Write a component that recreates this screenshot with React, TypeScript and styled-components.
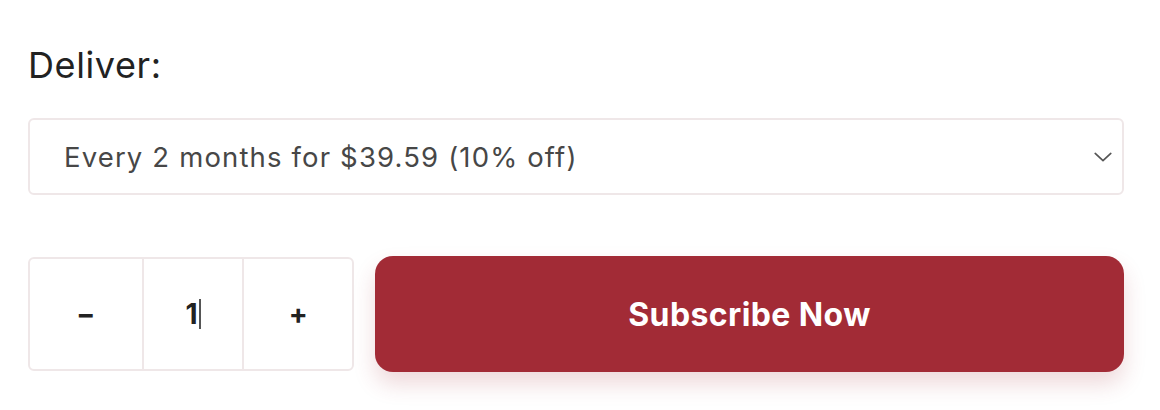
import * as React from "react";
import styled, { createGlobalStyle } from "styled-components";

const GlobalStyle = createGlobalStyle`
  html, body {
    margin: 0;
    padding: 0;
    background: #ffffff;
  }
  body {
    font-family: Inter, "Noto Sans", sans-serif;
  }
`;

const Page = styled.div`
  width: 1160px;
  height: 410px;
  box-sizing: border-box;
  padding: 42px 36px 0 28px;
  display: flex;
  flex-direction: column;
`;

const Label = styled.div`
  font-size: 36px;
  line-height: 46px;
  letter-spacing: 0.6px;
  color: #222222;
  margin-bottom: 30px;
`;

const SelectBox = styled.div`
  height: 77px;
  box-sizing: border-box;
  border: 2px solid #efe7e8;
  border-radius: 6px;
  display: flex;
  align-items: center;
  justify-content: space-between;
  padding: 0 0 0 34px;
  font-size: 27.5px;
  letter-spacing: 1.15px;
  color: #474747;
  margin-bottom: 61px;
`;

const Chevron = styled.svg`
  width: 34px;
  height: 34px;
  margin-right: 2px;
  color: #555555;
`;

const ActionRow = styled.div`
  display: flex;
  align-items: stretch;
  gap: 21px;
  height: 116px;
`;

const Stepper = styled.div`
  display: flex;
  width: 326px;
  box-sizing: border-box;
  border: 2px solid #efe7e8;
  border-radius: 6px;
  margin: 1px 0;
`;

const StepCell = styled.div<{ $width: number; $divider?: boolean }>`
  width: ${({ $width }) => $width}px;
  display: flex;
  align-items: center;
  justify-content: center;
  font-size: 28px;
  font-weight: 700;
  color: #222222;
  border-left: ${({ $divider }) => ($divider ? "2px solid #efe7e8" : "none")};
`;

const Caret = styled.span`
  display: inline-block;
  width: 2px;
  height: 30px;
  background: #555555;
  margin-left: 1px;
`;

const SubscribeButton = styled.button`
  flex: 1;
  border: none;
  border-radius: 18px;
  background: #a22b36;
  color: #ffffff;
  font-family: Inter, "Noto Sans", sans-serif;
  font-size: 32px;
  font-weight: 700;
  letter-spacing: 0.4px;
  box-shadow: 0 12px 22px rgba(162, 43, 54, 0.18);
  cursor: pointer;
`;

const App: React.FC = () => {
  return (
    <>
      <GlobalStyle />
      <Page>
        <Label>Deliver:</Label>
        <SelectBox>
          <span>Every 2 months for $39.59 (10% off)</span>
          <Chevron viewBox="0 0 24 24" fill="none" stroke="currentColor" strokeWidth={1.2} strokeLinecap="round" strokeLinejoin="round">
            <path d="m6.5 9.5 5.5 5 5.5-5" />
          </Chevron>
        </SelectBox>
        <ActionRow>
          <Stepper>
            <StepCell $width={113}>−</StepCell>
            <StepCell $width={100} $divider>
              1<Caret />
            </StepCell>
            <StepCell $width={109} $divider>+</StepCell>
          </Stepper>
          <SubscribeButton>Subscribe Now</SubscribeButton>
        </ActionRow>
      </Page>
    </>
  );
};

export default App;
